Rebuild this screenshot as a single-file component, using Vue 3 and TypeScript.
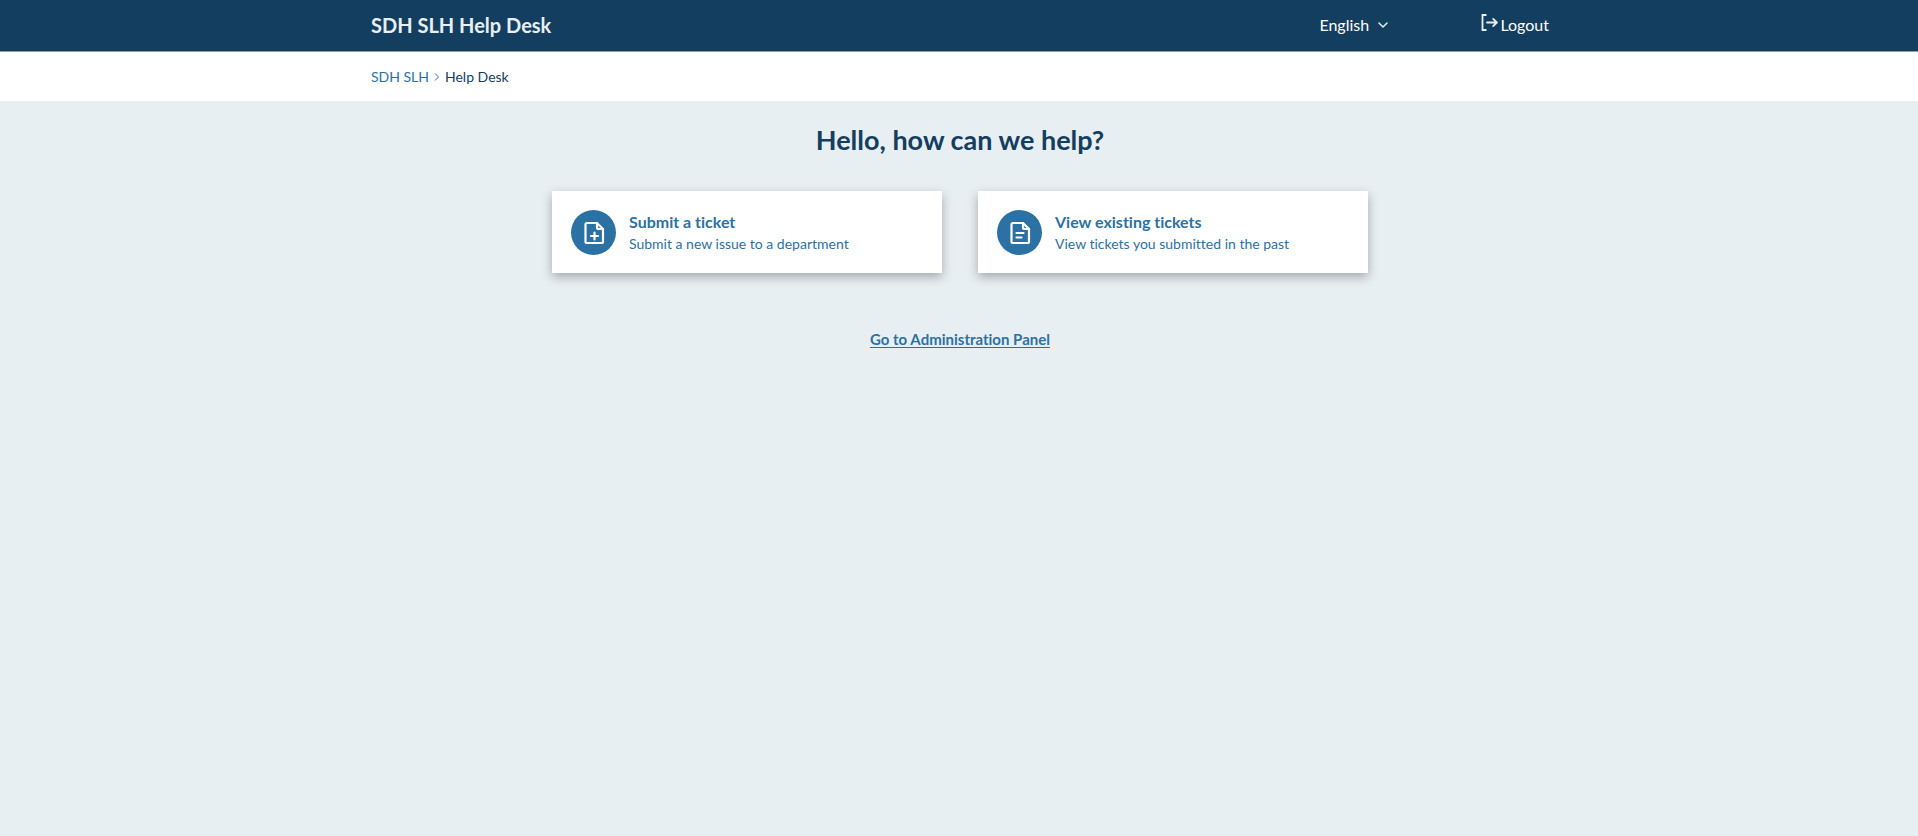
<script setup lang="ts">
import { ref } from 'vue'

interface Action {
  title: string
  text: string
  icon: 'new' | 'list'
}

const language = ref('English')
const languages: string[] = ['English']
const actions: Action[] = [
  { title: 'Submit a ticket', text: 'Submit a new issue to a department', icon: 'new' },
  { title: 'View existing tickets', text: 'View tickets you submitted in the past', icon: 'list' },
]
</script>

<template>
  <div class="page">
    <header class="header">
      <div class="container header-row">
        <a class="brand" href="#">SDH SLH Help Desk</a>
        <div class="tools">
          <div class="language">
            <select v-model="language" aria-label="Language">
              <option v-for="item in languages" :key="item">{{ item }}</option>
            </select>
            <svg class="caret" viewBox="0 0 10 6" aria-hidden="true"><path d="M1 1l4 4 4-4" /></svg>
          </div>
          <a class="logout" href="#">
            <svg viewBox="0 0 17 17" aria-hidden="true">
              <path d="M5.500 1H1.500v15h4" />
              <path class="arrow" d="M6 8.500h10M12.200 4.900l3.600 3.600-3.600 3.600" />
            </svg>
            <span>Logout</span>
          </a>
        </div>
      </div>
    </header>

    <nav class="breadcrumbs" aria-label="Breadcrumb">
      <div class="container trail">
        <a href="#">SDH SLH</a>
        <svg viewBox="0 0 6 8" aria-hidden="true"><path d="M1 .5L4.500 4 1 7.500" /></svg>
        <span>Help Desk</span>
      </div>
    </nav>

    <main class="main">
      <h1>Hello, how can we help?</h1>
      <div class="cards">
        <a v-for="action in actions" :key="action.title" class="card" href="#">
          <span class="badge">
            <svg viewBox="0 0 24 24" aria-hidden="true">
              <path d="M15 2H5a1.500 1.500 0 0 0-1.500 1.500v17A1.500 1.500 0 0 0 5 22h14.500a1.500 1.500 0 0 0 1.500-1.500V8z" />
              <path d="M15 2v4.500A1.500 1.500 0 0 0 16.500 8H21" />
              <path v-if="action.icon === 'new'" d="M12.500 11.500v7M9 15h7" />
              <path v-else d="M8.500 12h7M8.500 16.500h5" />
            </svg>
          </span>
          <span class="card-text">
            <strong>{{ action.title }}</strong>
            <span>{{ action.text }}</span>
          </span>
        </a>
      </div>
      <a class="admin" href="#">Go to Administration Panel</a>
    </main>
  </div>
</template>

<style>
body {
  background: #e8eff3;
}
</style>

<style scoped>
.page {
  min-height: 100vh;
  background: #e8eff3;
  color: #143e5f;
  font-family: Lato, "Liberation Sans", sans-serif;
  font-size: 14px;
  font-variant-ligatures: none;
}

.page * {
  box-sizing: border-box;
}

.container {
  width: 100%;
  max-width: 1210px;
  margin: 0 auto;
  padding: 0 15px 0 17px;
}

.header {
  background: #143e5f;
  border-bottom: 1px solid #8aa0b1;
  color: #fff;
}

.header-row {
  display: flex;
  align-items: center;
  justify-content: space-between;
  min-height: 51px;
  padding-bottom: 2px;
}

.brand {
  color: #e8eff3;
  font-size: 20px;
  font-weight: 700;
  line-height: 24px;
  text-decoration: none;
}

.tools {
  display: flex;
  align-items: center;
  gap: 93px;
  font-size: 16px;
  line-height: 24px;
}

.language {
  display: flex;
  align-items: center;
}

.language select {
  appearance: none;
  margin: 0 -18px 0 0;
  padding: 0 27px 0 0;
  border: 0;
  background: transparent;
  color: #fff;
  font: inherit;
  cursor: pointer;
}

.language option {
  color: #143e5f;
}

.caret {
  width: 10px;
  height: 6px;
  pointer-events: none;
  fill: none;
  stroke: #e8eff3;
  stroke-width: 1.5;
  stroke-linecap: round;
  stroke-linejoin: round;
}

.logout {
  display: flex;
  align-items: center;
  gap: 2px;
  color: #fff;
  text-decoration: none;
}

.logout svg {
  width: 17px;
  height: 17px;
  margin-bottom: 4px;
  fill: none;
  stroke: #e8eff3;
  stroke-width: 1.8;
}

.logout .arrow {
  stroke-linecap: round;
  stroke-linejoin: round;
}

.breadcrumbs {
  background: #fff;
}

.trail {
  display: flex;
  align-items: center;
  min-height: 49px;
  gap: 5px;
  line-height: 20px;
}

.trail a {
  color: #2c71a3;
  text-decoration: none;
}

.trail svg {
  width: 6px;
  height: 8px;
  fill: none;
  stroke: #2c71a3;
}

.main {
  display: flex;
  flex-direction: column;
  align-items: center;
  padding: 20px 16px 20px 18px;
}

h1 {
  margin: 0 0 32px;
  font-size: 27px;
  font-weight: 700;
  line-height: 38px;
}

.cards {
  display: grid;
  grid-template-columns: repeat(2, 1fr);
  gap: 36px;
  width: 100%;
  max-width: 816px;
}

.card {
  display: flex;
  align-items: center;
  gap: 13px;
  min-height: 82px;
  padding: 18px 19px 17px;
  background: #fff;
  box-shadow: 0 4px 10px rgba(0, 0, 0, 0.3);
  color: #2c71a3;
  text-decoration: none;
}

.badge {
  display: flex;
  flex: none;
  align-items: center;
  justify-content: center;
  width: 45px;
  height: 45px;
  border-radius: 50%;
  background: #2c71a3;
}

.badge svg {
  width: 24px;
  height: 24px;
  fill: none;
  stroke: #fff;
  stroke-width: 2.2;
  stroke-linejoin: round;
  stroke-linecap: round;
}

.card-text {
  display: flex;
  flex-direction: column;
  line-height: 22px;
}

.card-text strong {
  font-size: 16px;
  font-weight: 700;
}

.admin {
  margin-top: 59px;
  border-bottom: 1px solid #2c71a3;
  color: #2c71a3;
  font-size: 15px;
  font-weight: 700;
  line-height: 15px;
  text-decoration: none;
}

@media (max-width: 700px) {
  .cards {
    grid-template-columns: 1fr;
  }
}
</style>
